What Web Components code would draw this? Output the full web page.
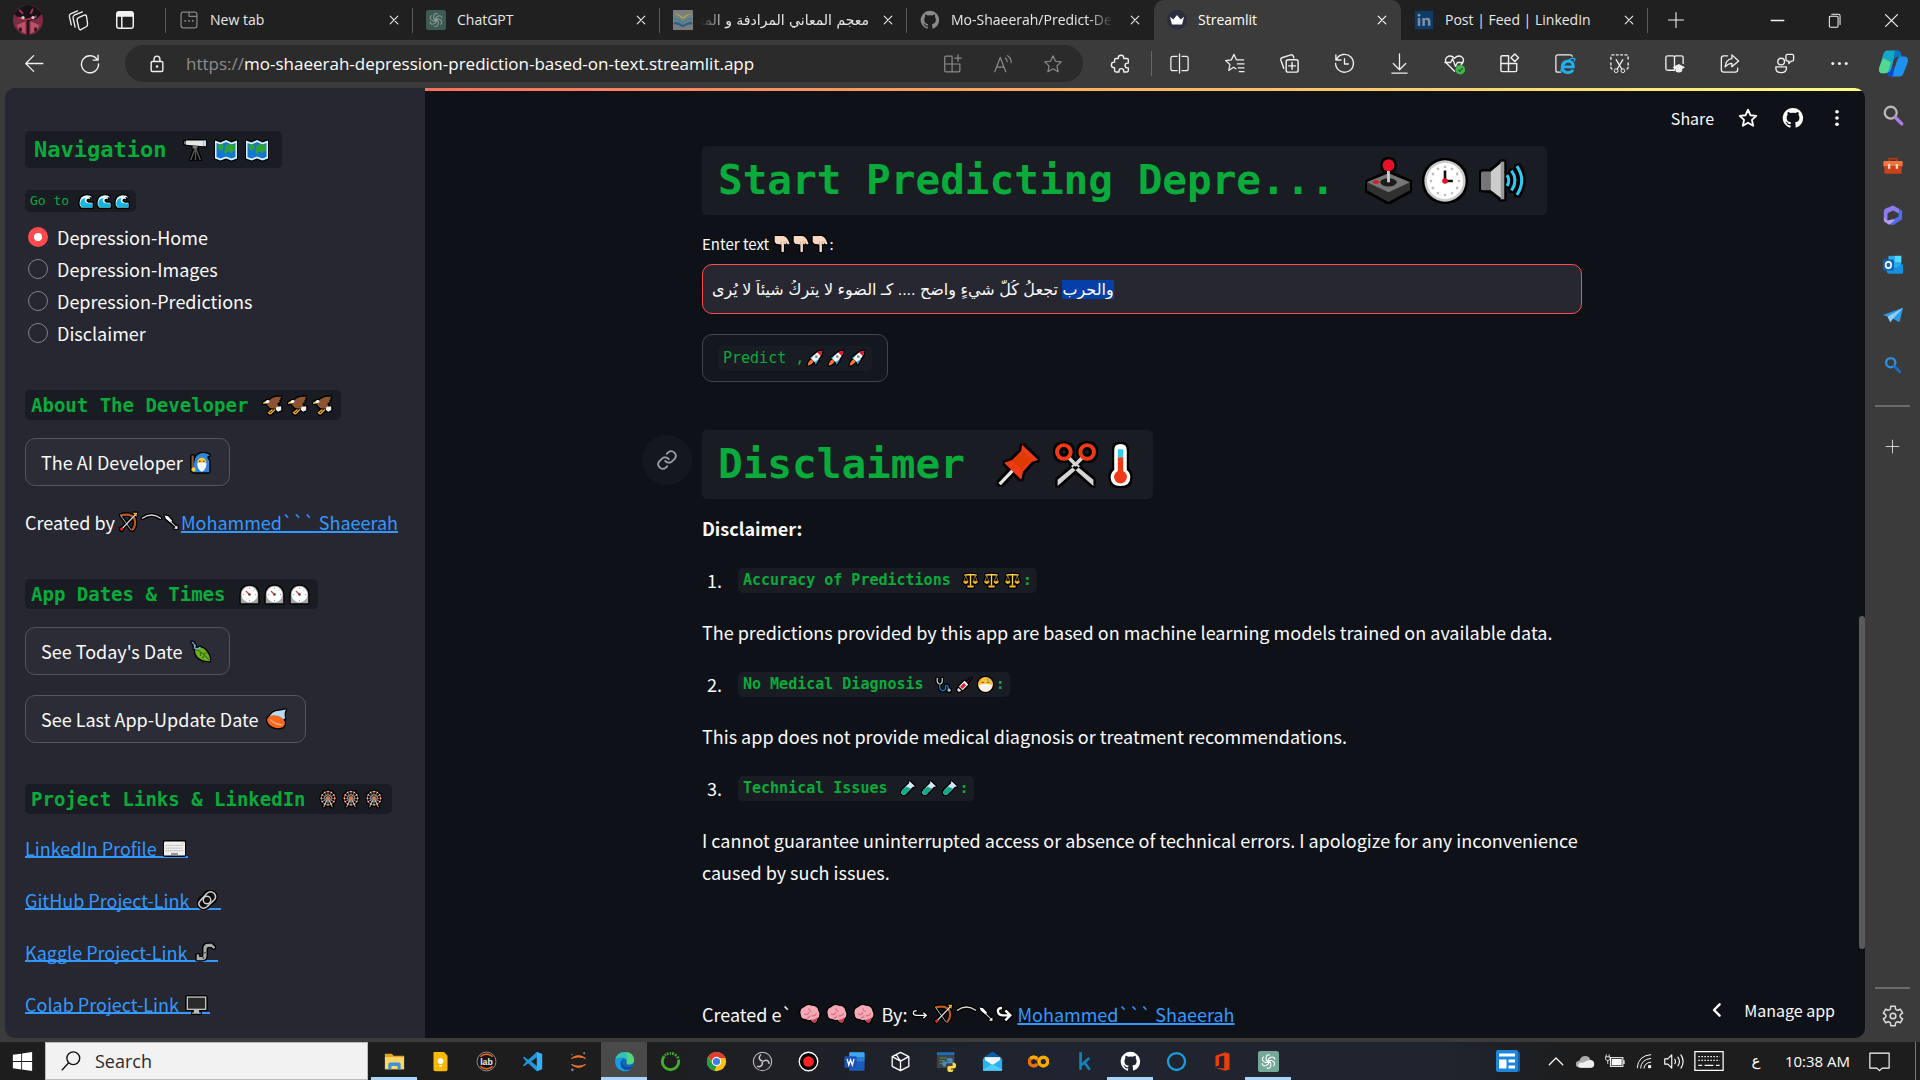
<!DOCTYPE html>
<html lang="en">
<head>
<meta charset="utf-8">
<title>Streamlit</title>
<style>
  html, body { margin: 0; height: 100%; background: #1d1d1d; overflow: hidden; }
  body { font-family: "Noto Sans CJK SC", "Noto Sans", sans-serif; color: #fafafa; }
</style>
</head>
<body>
<app-shell></app-shell>
<script>
const OPENAI = '<g fill="none" stroke="currentColor" stroke-width="1.5">' + [0,60,120,180,240,300].map(a => `<path transform="rotate(${a} 12 12)" d="M8.8 10.2V6.2a3.6 3.6 0 0 1 5.6-2.9M8.8 10.2l5.6 3.2"/>`).join('') + '</g>';
const GITHUB = '<path fill="currentColor" d="M12 1A11 11 0 0 0 8.500 22.500c.6.1.8-.3.8-.6v-2.100c-3.100.7-3.700-1.300-3.700-1.300-.5-1.300-1.200-1.600-1.200-1.600-1-.7.1-.7.1-.7 1.100.1 1.700 1.200 1.700 1.200 1 1.700 2.600 1.200 3.200.9.1-.7.4-1.200.7-1.500-2.500-.3-5-1.200-5-5.400 0-1.200.4-2.200 1.100-3-.1-.3-.5-1.400.1-2.900 0 0 .9-.3 3 1.100a10.500 10.500 0 0 1 5.500 0c2.100-1.400 3-1.100 3-1.100.6 1.500.2 2.600.1 2.900.7.8 1.100 1.800 1.100 3 0 4.200-2.500 5.100-5 5.400.4.3.8 1 .8 2v3c0 .3.200.7.8.6A11 11 0 0 0 12 1z"/>';
const L = (d, w = 1.3) => `<path d="${d}" fill="none" stroke="currentColor" stroke-width="${w}" stroke-linecap="round" stroke-linejoin="round"/>`;
const STAR = 'M12 3l2.700 6 6.300.7-4.700 4.300 1.300 6.500-5.600-3.300-5.600 3.300 1.300-6.500L3 9.700 9.300 9z';

/* Line icons and logos, all on a 24 x 24 grid. */
const ICONS = {
  avatar: '<circle cx="12" cy="12" r="12" fill="#7a2c40"/><path d="M1 7q5-7 11-7t11 7l-4 4-7 2-7-2z" fill="#161218"/><path d="M3 16l7-3v10q-5-2-7-7zM14 13l7 3q-2 5-7 7z" fill="#c05069"/><path d="M5 4l3 3M16 3l-2 4M4 10l7 2 8-3" stroke="#a9324f" stroke-width="1.500" fill="none"/><circle cx="8" cy="10" r="1.300" fill="#ccc"/><circle cx="16" cy="10" r="1.300" fill="#ccc"/><path d="M6 18v3M18 18v3M12 12v12" stroke="#25131b" stroke-width="2"/>',
  workspaces: L('M12 9l6-2.500q2-.8 2.300 1l1.200 8q.2 2-1.500 3l-5.500 3q-1.500.5-2-1L10.500 12q-.3-2 1.500-3zM8.500 19L6.300 9.500q-.4-2 1.300-3L16 3M4.500 16.500L2.500 8q-.4-2 1.300-3L11 2', 1.400),
  tabs: L('M3 5.500Q3 3 5.500 3h13Q21 3 21 5.500v13q0 2.500-2.500 2.500h-13Q3 21 3 18.500z', 1.600) + '<path d="M3 4.500Q3.500 3 5.500 3h13q2 0 2.500 1.500V8.500H3z" fill="currentColor"/>' + L('M8.500 8v13', 1.600),
  newtab: '<g color="#858585">' + L('M2.500 5Q2.500 2.500 5 2.500h14q2.500 0 2.500 2.500v14q0 2.500-2.500 2.500H5Q2.500 21.500 2.500 19zM12 3v4.500h9', 1.500) + '<path d="M6.500 12h2v2h-2zM11 12h2v2h-2zM15.500 12h2v2h-2z" fill="currentColor"/></g>',
  x: L('M5.500 5.500l13 13M18.500 5.500l-13 13', 2),
  winx: L('M4.500 4.500l15 15M19.500 4.500l-15 15', 1.500),
  gptdim: '<rect width="24" height="24" rx="3" fill="#3c5b53"/><g color="#8a9c97" transform="translate(2 2) scale(.83)">' + OPENAI + '</g>',
  gpt: '<rect width="24" height="24" rx="3" fill="#74a899"/><g color="#fff" transform="translate(2 2) scale(.83)">' + OPENAI + '</g>',
  book: '<rect width="24" height="24" fill="#7d7d7d"/><path d="M2 5q5-1 10 4 5-5 10-4-6 1-8 5h-4Q8 6 2 5z" fill="#a6b04a"/><path d="M1 9q6 0 11 5 5-5 11-5v3q-6 0-11 5-5-5-11-5z" fill="#3f8595"/><path d="M1 14q6 0 11 4 5-4 11-4v3q-6 0-11 4-5-4-11-4z" fill="#2c5f89"/>',
  github: GITHUB,
  githubdim: '<g color="#8a8a8a">' + GITHUB + '</g>',
  crown: '<circle cx="12" cy="12" r="12" fill="#2c2d3f"/><path d="M3.500 8l4 3.500L12 6l4.500 5.500 4-3.500-2.500 9.500H6z" fill="#fff"/>',
  linkedin: '<rect x="1" y="1" width="22" height="22" fill="#0f3b68"/><g fill="#7e8fa3"><rect x="4.500" y="9.500" width="3" height="9.500"/><circle cx="6" cy="6.300" r="1.700"/><path d="M10 9.500h3v1.300q1-1.600 3.300-1.600 3.400 0 3.400 4.300V19h-3v-5q0-2.200-1.700-2.200-2 0-2 2.200v5h-3z"/></g>',
  plus: L('M12 3v18M3 12h18'),
  min: L('M4 12h16', 1.600),
  restore: L('M5.500 8Q5.500 6.500 7 6.500h8q1.500 0 1.500 1.500v11q0 1.500-1.500 1.500H7q-1.500 0-1.500-1.500zM8.500 4h8.500q2 0 2 2v11'),
  back: L('M21.500 12h-19M11 3l-9 9 9 9', 1.500),
  reload: L('M20 7.500A9.300 9.300 0 1 0 21.300 12M20.800 2.500v5.300h-5.300', 1.500),
  lock: L('M5 10.500Q5 9 6.500 9h11q1.500 0 1.500 1.500v9q0 1.500-1.500 1.500h-11Q5 21 5 19.500zM8.500 9V6.500q0-4 3.500-4t3.500 4V9', 1.700) + '<circle cx="12" cy="15" r="1.500" fill="currentColor"/>',
  appadd: L('M3 5q0-1.500 1.500-1.500H11V12H3zM3 12h8v8.500H4.500Q3 20.500 3 19zM11 12h8.500v7q0 1.500-1.500 1.500h-7zM17.500 2v7M14 5.500h7'),
  aloud: L('M3 20.500L9 5l6 15.500M5 15.500h8M14.500 5.500q2 1.500 2 4M17 3q4 2.500 4 7.500'),
  star: L(STAR),
  starb: L(STAR, 2),
  puzzle: L('M9 5.500a3 3 0 0 1 6 0V6h3.500Q20 6 20 7.500V11h-1a2.600 2.600 0 0 0 0 5.200h1v3q0 1.500-1.500 1.500H15v-1a2.600 2.600 0 0 0-5.200 0v1H6.500Q5 20.700 5 19.200V16H4.500a3 3 0 0 1 0-6H5V7.500Q5 6 6.500 6H9z', 1.500),
  split: L('M9.500 4.500H5q-2 0-2 2v11q0 2 2 2h4.500M14.500 4.500H19q2 0 2 2v11q0 2-2 2h-4.500M12 2v20'),
  favs: L('M13.500 17.500L11 16l-5 3.300 1.200-6.200L2.700 9l6-.8L11.500 2.500 14 8.200h7.500M15 12.500h7M16 16.500h6M17 20.500h5'),
  collect: L('M8.500 10q0-2 2-2H19q2 0 2 2v9q0 2-2 2h-8.500q-2 0-2-2zM14.700 11v7M11.200 14.500h7M6 17L3 8.500Q2.500 6.500 4 6l9.500-3q1.800-.4 2.500 1.500L16.500 6', 1.500),
  history: L('M3.500 8A9.300 9.300 0 1 1 2.700 12M3 3v5.300h5.300M12 7v5.500h4', 1.400),
  download: L('M12 2v16M5.500 12l6.500 6.500 6.500-6.500M4 22h16'),
  health: L('M12 20L3.500 11.500Q1.500 8 4 5.500q4-3 8 1 4-4 8-1 2.500 2.500.5 6L19 13M2 11h6l2-4 3 8 2-4h5', 1.400) + '<circle cx="18" cy="18.500" r="5" fill="#44b548"/><path d="M15.800 18.500l1.700 1.600 3-3.300" stroke="#163" fill="none" stroke-width="1.300"/>',
  grid: L('M3 5.500Q3 4 4.500 4H11v8H3zM3 12h8v8.500H4.500Q3 20.500 3 19zM11 12h8.500v7q0 1.500-1.500 1.500h-7zM17.500 2l4 4-4 4-4-4z', 1.500),
  ie: L('M8 21H5q-2 0-2-2V5q0-2 2-2h13q2 0 2 1.500') + '<path d="M9.500 15.500h11.700q0-6-5.600-6-5.800.3-6 6.300.3 5.500 5.900 5.700 4 0 5.200-3" fill="none" stroke="#22b0ee" stroke-width="3"/><path d="M8.500 21.500q-1.500-3 4-9.500Q18 6.500 22 6.500q1.500.5 0 3.500" fill="none" stroke="#22b0ee" stroke-width="1.300"/>',
  snip: '<path d="M3 8V5q0-2 2-2h14q2 0 2 2v3M3 11v5q0 2 2 2M21 11v5q0 2-2 2" stroke="currentColor" fill="none" stroke-width="1.400" stroke-dasharray="3 1.500"/>' + L('M8.500 8l6 10M15.500 8l-6 10') + '<circle cx="8.500" cy="19.500" r="2" stroke="currentColor" fill="none"/><circle cx="15.500" cy="19.500" r="2" stroke="currentColor" fill="none"/>',
  learn: L('M12 5v13M12 19H5q-2 0-2-1.500V5.500Q3 4 5 4h5.500q1.500 0 1.500 1.500Q12 4 13.500 4H19q2 0 2 1.500V12', 1.400) + '<path d="M16.500 12.500l6.500 3.500-3 1.800V20q-3.500 3-7 0v-2.200L10 16z" fill="currentColor"/>',
  share: L('M10 4H6Q3.500 4 3.500 6.500v12Q3.500 21 6 21h12q2.500 0 2.500-2.500V17M14.500 3l7 6.300-7 6.200v-3.700q-4 0-7 3.700.5-7.500 7-8.500z', 1.400),
  people: '<circle cx="8.500" cy="10" r="3.500" fill="none" stroke="currentColor" stroke-width="1.400"/>' + L('M3 15.500h11v1.500q0 4.500-5.500 4.500T3 17zM13.500 4Q13.500 2.500 15 2.500h5Q21.500 2.500 21.500 4v4q0 1.500-1.500 1.500h-1l-2.500 2.500V9.500q-3 0-3-1.500z', 1.400),
  more: '<g fill="currentColor"><circle cx="5" cy="12" r="1.600"/><circle cx="12" cy="12" r="1.600"/><circle cx="19" cy="12" r="1.600"/></g>',
  copilot: '<path d="M7 2h8l-2 4-3 11q-1 2.500-4 2.500H3Q0 19 1 15L4 5q1-3 3-3z" fill="#18a7c8"/><path d="M4 8l6 3-2 7q-1 1.500-3 1.500H3Q0 19 1 15z" fill="#55d790"/><path d="M13 2h2q2.500 0 3 3l.5 2H15q-2 0-3 3z" fill="#0874c4"/><path d="M17 22H10l2-4 3-9q1-2.500 3-2.500h2.500Q24 7 23 11l-3 8q-1 3-3 3z" fill="#1d90f0"/><path d="M7 19.500q2-.5 3-2.500l2-4v7l-1 2H9q-2 0-2-2.500z" fill="#1247d0"/>',
  dots: '<g fill="currentColor"><circle cx="12" cy="4.500" r="2.200"/><circle cx="12" cy="12" r="2.200"/><circle cx="12" cy="19.500" r="2.200"/></g>',
  magnify: '<circle cx="9.500" cy="9.500" r="6.500" fill="none" stroke="#b9b9b9" stroke-width="2.500"/><path d="M15 15l6.500 6.500" stroke="#b07be8" stroke-width="3.600" stroke-linecap="round"/>',
  toolbox: '<path d="M8 8V5h8v3" stroke="#b33b12" stroke-width="2" fill="none"/><rect x="1.500" y="7.500" width="21" height="6.500" rx="1.500" fill="#f2743c"/><path d="M2.500 13h19v7q0 1.500-1.500 1.500H4q-1.500 0-1.500-1.500z" fill="#c9421a"/><path d="M6.500 11h2.500v5H6.500zM15 11h2.500v5H15z" fill="#f5d6c8"/>',
  m365: '<path d="M12 1.500l7 4v5l-7-3.500-6 3v8l-4-3V8q0-2 2-3z" fill="#8d7bf0"/><path d="M19 5.500l3 2v9l-9 6q-2 1-4-.5l-3-2 6-3 6-3.500z" fill="#4e6de6"/><path d="M2 14.500l4 3.500 6-1.500 2 1-5 4.500q-1 .5-2 0l-4-2.500q-1-1-1-2z" fill="#b49cf5"/>',
  outlook: '<rect x="7" y="2" width="14" height="14" fill="#28a8ea"/><path d="M14 2h7v7h-7z" fill="#50d9ff"/><path d="M5 11l9 5 9-5v9q0 1.500-1.500 1.500H7L5 20z" fill="#1490df"/><rect x="1" y="6" width="12" height="12" rx="1" fill="#0f64b8"/><ellipse cx="7" cy="12" rx="3" ry="3.400" fill="none" stroke="#fff" stroke-width="1.800"/>',
  plane: '<path d="M1 12L23 4l-4 16-7-4z" fill="#2c9be8"/><path d="M6 14l17-10-11 12-3 4z" fill="#8fd0fa"/>',
  bing: '<circle cx="9.500" cy="9.500" r="5" fill="none" stroke="#2d8fe0" stroke-width="2.600"/><path d="M13.500 13.500l6 6" stroke="#1b6fc4" stroke-width="3" stroke-linecap="round"/>',
  gear: L([0,1,2,3,4,5].map(i => { const p = (r, d) => { const t = (i * 60 + d - 90) * Math.PI / 180; return (12 + r * Math.cos(t)).toFixed(1) + ' ' + (12 + r * Math.sin(t)).toFixed(1); }; return (i ? 'L' : 'M') + p(10, -13) + 'L' + p(10, 13) + 'L' + p(7.5, 20) + 'Q' + p(6.8, 30) + ' ' + p(7.5, 40); }).join('') + 'z', 1.500) + '<circle cx="12" cy="12" r="2.800" fill="none" stroke="currentColor" stroke-width="1.500"/>',
  link: L('M10 13a5 5 0 0 0 7.500.5l3-3a5 5 0 0 0-7-7l-1.700 1.700M14 11a5 5 0 0 0-7.500-.5l-3 3a5 5 0 0 0 7 7l1.700-1.700', 2),
  chevL: L('M15.500 4.500L8 12l7.500 7.500', 3.200),
  windows: '<path d="M1 4.300l9.500-1.300v8.500H1zM11.500 2.900L23 1.200v10.300H11.500zM1 12.500h9.500V21L1 19.700zM11.500 12.500H23v10.300l-11.500-1.700z" fill="#fff"/>',
  search: '<circle cx="14.500" cy="9" r="7" fill="none" stroke="#111" stroke-width="1.500"/><path d="M9.500 14L2 22" stroke="#111" stroke-width="1.500"/>',
  folder: '<path d="M1 3h8l2 2.500h12V9H1z" fill="#e0a526"/><path d="M1 7h22v14H1z" fill="#fcd667"/><path d="M5 21v-6q0-2 2-2h10q2 0 2 2v6h-3.500v-4h-7v4z" fill="#3a92dc"/>',
  keep: '<path d="M5 1h11l4 4.500V21q0 2-2 2H6q-2 0-2-2V2q0-1 1-1z" fill="#fbb904"/><circle cx="12" cy="11.500" r="3.300" fill="#fff"/><path d="M10.500 16h3v2h-3z" fill="#fff"/>',
  lab: '<circle cx="12" cy="12" r="10.800" fill="#151515" stroke="#999" stroke-width="1"/><path d="M5 6.500Q12 .5 19 6.500M5 17.500q7 6 14 0" stroke="#e8651a" stroke-width="1.800" fill="none"/><text x="12" y="15.500" text-anchor="middle" font-size="10" font-weight="700" fill="#eee" font-family="Liberation Sans">lab</text>',
  vscode: '<path d="M17 1l6 2.500v17L17 23 7 14l-4.500 3.500L1 16.500 5 12 1 7.500l1.500-1L7 10zM17 7l-6.500 5 6.500 5z" fill="#2196dd" fill-rule="evenodd"/><path d="M17 1l6 2.500v17L17 23z" fill="#37aef5"/>',
  jupyter: '<path d="M4 8.500q8-6.500 16 0-8-3.500-16 0zM4 15.500q8 6.500 16 0-8 3.500-16 0z" fill="#f37726" stroke="#f37726"/><circle cx="18.500" cy="2.500" r="1.200" fill="#888"/><circle cx="5" cy="21.500" r="1.500" fill="#888"/><circle cx="4.500" cy="4" r=".8" fill="#888"/>',
  edge: '<circle cx="12" cy="12" r="11" fill="#1267b8"/><path d="M1.200 11Q2.500 1 12.500 1 22.500 1.500 23 10.500q-.5 5-5.500 5-3.500-.3-3-2.500.5-4-4-5Q4 7 1.200 11z" fill="#35c1b1"/><path d="M14 1.200q9 1 9 9.500-.5 4.500-5.500 4.800-3.500-.3-3-2.500 2-6-.5-11.800z" fill="#5fdc6b" opacity=".75"/><path d="M10 8.500q-5 5-1 10.500 4 4.500 11 1-4 4.500-11 2.500Q1 20 1.200 11 4 6.500 10 8.500z" fill="#1a9ae8"/><path d="M10 9q-3 3 0 7t11 1.500l1 .5-2 2q-7 3.500-11-1.500-3-5.500 1-9.500z" fill="#0c4f99"/>',
  anaconda: '<circle cx="12" cy="12" r="9.400" fill="none" stroke="#43b02a" stroke-width="3.200" stroke-dasharray="36 1 1.500 1.200 2 1.500 1.500 1.200 2 1.500 2 1.500 2 1.500"/>',
  chrome: '<circle cx="12" cy="12" r="11" fill="#fbc116"/><path d="M2.500 6.500a11 11 0 0 1 19 0L22 8H12L8 14z" fill="#e33b2e"/><path d="M2.500 6.500l5.500 9 4 1.500L9.500 22.700A11 11 0 0 1 2.500 6.500z" fill="#229a48"/><circle cx="12" cy="12" r="5.300" fill="#fff"/><circle cx="12" cy="12" r="4.100" fill="#3b7ded"/>',
  obs: '<circle cx="12" cy="12" r="10.500" fill="#26252b" stroke="#c6c6c6" stroke-width="1.200"/>' + [0,120,240].map(a => `<path transform="rotate(${a} 12 12)" d="M12 11.500q-4.500-1.500-3.500-5 .5-1.500 2-2.500" fill="none" stroke="#c6c6c6" stroke-width="1.700"/>`).join(''),
  rec: '<circle cx="12" cy="12" r="10.600" fill="#000" stroke="#fff" stroke-width="1.500"/><circle cx="12" cy="12" r="6" fill="#f22"/>',
  word: '<rect x="6" y="1.500" width="17.500" height="21" rx="1.500" fill="#1b5cbe"/><path d="M7.500 1.500H22q1.500 0 1.500 1.500v4H6V3q0-1.500 1.500-1.500z" fill="#41a5ee"/><path d="M6 7h17.500v5H6z" fill="#2b7cd3"/><rect x=".5" y="6" width="14" height="13" rx="1" fill="#1a52b5"/><path d="M3.500 9l2 7 2-6 2 6 2-7" stroke="#fff" stroke-width="1.500" fill="none"/>',
  cube: L('M12 1.500l9.500 5v11L12 22.500l-9.500-5v-11zM2.500 6.500l9.500 5 9.500-5M12 11.500v11M7 4l5 7.500', 1.500),
  python: '<rect x="1" y="1.500" width="20" height="18" fill="#3d4348"/><path d="M1 1.500h20v3H1z" fill="#176fc1"/><path d="M4 8h8M4 11h6M4 14h4" stroke="#5a9c3e"/><path d="M12 9q4-2 7 0v5h-6q-2 0-2 4-4 0-4-3.500T10 12h5v-1h-3z" fill="#4b8bbe"/><path d="M19 13q4 0 4 3.500T20 20h-3v1h3q0 3-3.500 3T13 21v-2q0-2 2-2h4z" fill="#ffd748"/>',
  mail: '<path d="M1 8L12 .5 23 8v4H1z" fill="#0a5dab"/><path d="M3 7h18v10H3z" fill="#f3f7fa"/><path d="M1 8.500l11 7.500 11-7.500V21q0 1.500-1.500 1.500h-19Q1 22.500 1 21z" fill="#26b3ee"/><path d="M1 21l11-6 11 6v1.500H1z" fill="#5fd2fb" opacity=".8"/>',
  colab: '<g fill="none" stroke-width="4"><circle cx="6.500" cy="12" r="5" stroke="#e8710a" stroke-dasharray="26 6" stroke-dashoffset="-3"/><circle cx="17.500" cy="12" r="5" stroke="#f9ab00"/><path d="M3 8.500a5 5 0 0 1 7 0" stroke="#f9ab00"/></g>',
  kaggle: '<path d="M7.500 1.500v20M17.500 8l-9 8M11.500 12.500l6.500 9" stroke="#1282ba" stroke-width="3" fill="none"/>',
  ring: '<circle cx="12" cy="12" r="9.700" fill="none" stroke="#18a0e0" stroke-width="2.600"/>',
  office: '<path d="M4 5.500L15 1.500l5 1.500v18l-5 1.500L4 19l10 1V5L8 6.500v10L4 18z" fill="#e83e0b"/>',
  news: '<rect x="3" y="2.500" width="21" height="20.500" rx="2" fill="#0b5ea8"/><rect x="0" y="1" width="22" height="22" rx="2" fill="#1c86dc"/><path d="M3 4.500h16v3H3zM3 10.500h7.500v9H3zM12.500 10.500H19v3h-6.500zM12.500 16.500H19v3h-6.500z" fill="#fff"/>',
  up: L('M3 17l9-9 9 9', 1.600),
  cloud: '<path d="M6 20q-5 0-5-4t4.500-4.500Q7 6 12 6q5.500 0 6.500 5Q23 11.500 23 15.500T19 20z" fill="#aaa"/><path d="M7 20q-4-.5-3-4 1.500-3 5-2l7-3q7-1 7 4.500Q23 20 19 20z" fill="#eee"/>',
  battery: '<rect x="6.500" y="8" width="15" height="10.500" fill="none" stroke="#fff" stroke-width="1.200"/><path d="M8 9.500h12V17H8zM22 11h1.500v4.500H22z" fill="#fff"/><path d="M1.500 4v3M5 4v3M.5 7H6v2.500Q5.500 11 3.300 11.500.8 11 .5 9.500zM3.300 11.500v4" stroke="#fff" fill="#1d1d1d"/>',
  wifi: L('M3 21Q4 5 21 3.500M7.500 21.500Q8 10 21 8.500M12 21.500q.5-7 9-8', 1.300) + '<path d="M17.500 17.500h4v4h-4z" fill="#fff"/>',
  volume: L('M2 9h3.500L10 4.500v15L5.500 15H2zM13.500 9.500q1.500 2.500 0 5M17 7q3.500 5 0 10M20.500 4.500q5 7.500 0 15', 1.300),
  keyboard: '<rect x=".7" y="4.500" width="22.600" height="15" fill="none" stroke="#fff" stroke-width="1"/><path d="M3.500 8.500h17M3.500 11.500h17" stroke="#fff" stroke-dasharray="1.200 1.200"/><path d="M3.500 15.500h3M8.500 15.500h7M17.500 15.500h3" stroke="#fff"/>',
  notif: L('M1 2.500h22v17h-8L12 22.500 9 19.500H1z', 1.300),
};

/* Small colour pictures used inside labels. */
const wheel = Array.from({length: 12}, (_, i) => `<path transform="rotate(${i * 30} 12 11)" d="M12 11V2" stroke="#ddd" stroke-width=".7"/><circle transform="rotate(${i * 30} 12 11)" cx="12" cy="2" r="1.100" fill="#f6d0c0"/>`).join('');
const PICS = {
  telescope: '<path d="M12 10L7 23M12 10l5 13M12 10v13" stroke="#555" stroke-width="1.500" fill="none"/><path d="M2 2.500h18v6L2 7z" fill="#e6e6e6"/><path d="M20 2.500h3V8.500h-3z" fill="#bfe6f3"/><path d="M0 3.500h2v3H0zM9 8h5v3H9z" fill="#777"/>',
  map: '<path d="M1 2.500l5.500 2L12 2l5.500 2.500L23 2.500v18l-5.500 2-5.500-2-5.500 2-5.500-2z" fill="#d8f0fb"/><path d="M2.500 5l4 1.500L12 4l5.500 2.500 4-1.500v14l-4 1.500-5.500-2-5.500 2-4-1.500z" fill="#1277d4"/><path d="M3 7l5-1 2 3-3 4-2-1zM12 7l4-1 5 1v5l-4 3-3-2-2 4-2-3z" fill="#30a138"/>',
  wave: '<path d="M1 14Q2 3 13 2q7 0 10 4-5-1-6 1 3 0 2 2-4-2-6 1-1 4 4 5h6v8H4q-4-4-3-9z" fill="#e9f8fd"/><path d="M2 16q1-8 9-9-3 5 1 8 5 2 11 1v7H5q-3-3-3-7z" fill="#13b4dd"/>',
  eagle: '<path d="M6 9q3-7 11-8l7 0-3 2.500h2l-3 2.500 2 0-4 4 2 4-5 2-6-1-4-4z" fill="#8c5431"/><path d="M1 9l4-4q4-.5 3 3l-3 1.500z" fill="#fff"/><path d="M0 10q0-3 4-3l-1 2z" fill="#ffc12b"/><path d="M17 14l6-1v5l-4 2-3-3z" fill="#f4f4f4"/><path d="M12 17l-5 4q2 3 4 0l4-4" fill="none" stroke="#f0a820" stroke-width="1.800"/>',
  mage: '<path d="M3 4v14" stroke="#8c5a35" stroke-width="2.500"/><path d="M5 11q1-9 9-10 7 0 9 3-4 0-3 3l2 3v13H4v-8z" fill="#2f86d8"/><circle cx="13.500" cy="11.500" r="5" fill="#fdc73a"/><path d="M8 13q5-2 11 0-1 8-5.500 9.500Q9 21 8 13z" fill="#f6f6f6"/><path d="M10.500 10h1.500v1.500h-1.500zM15 10h1.500v1.500H15z" fill="#222"/><circle cx="4" cy="20" r="2.500" fill="#fdc73a"/>',
  bow: '<path d="M3 4q14-3 17 5 2 7-3 13" fill="none" stroke="#c2571a" stroke-width="2.600"/><path d="M3 4l13 18" stroke="#ddd" stroke-width="1"/><path d="M4 21L21 3" stroke="#ddd" stroke-width="1.400"/><path d="M18 1l5 0-1 5z" fill="#e8b02f"/><path d="M2 20l3-2 2 2-3 3z" fill="#e22"/>',
  arc: '<path d="M0 7Q12-2 24 7" fill="none" stroke="#ddd" stroke-width="1.600"/>',
  dart: '<path d="M1 1l6 1 7 8-3 3-8-7z" fill="#fff"/><path d="M10 10l11 11" stroke="#ddd" stroke-width="1.800"/><path d="M23 24v-6l-6 5z" fill="#fff"/>',
  gauge: '<path d="M1 23V12Q2 1 12 1t11 11v11z" fill="#a5a5a5"/><circle cx="12" cy="12" r="10" fill="#fff"/><path d="M12 12L7.500 7.500" stroke="#e33" stroke-width="1.600"/><circle cx="12" cy="12" r="1.600" fill="#444"/><path d="M12 3.500v1.500M3.500 12H5M19 12h1.500M12 19v1.500M18 6l-1 1" stroke="#888"/>',
  leaf: '<path d="M6 9q8-4 13 3 4 5 4 11-8 0-12-3-6-4-5-11z" fill="#6fae1e"/><path d="M7 10q8 3 15 12M12 12v5M16 14l3 0M16 17l-2 3" stroke="#2f6f0c" stroke-width="1.200" fill="none"/><path d="M2 1l4 4-1 3 4 1 3-2M4 2l2 7" fill="none" stroke="#6fa8d6" stroke-width="1.500"/>',
  drop: '<path d="M3 11q3-9 12-9l8-1.500q-3 4-1 10-6 5-19 .5z" fill="#b5dcf2"/><ellipse cx="11.500" cy="14.500" rx="10.500" ry="7" transform="rotate(18 11.500 14.500)" fill="#f4671f"/><path d="M5 12q5 6 14 6" stroke="#ffab76" stroke-width="1.400" fill="none"/>',
  ferris: '<path d="M12 11L6 23M12 11l6 12" stroke="#999" stroke-width="1.500"/><circle cx="12" cy="11" r="9" fill="none" stroke="#c8512a" stroke-width="1.300"/><circle cx="12" cy="11" r="5" fill="none" stroke="#9aa" stroke-width=".9"/>' + wheel + '<circle cx="12" cy="11" r="2.200" fill="#ea6a3a"/>',
  keys: '<rect x="0" y="4" width="24" height="16" rx="1" fill="#f0f0f0"/><path d="M2 8.500h20M2 11.500h20M2 14.500h20" stroke="#bbb" stroke-width="1.500" stroke-dasharray="1.500 .7"/><path d="M8 17h8v2.500H8z" fill="#999"/><circle cx="21.500" cy="6" r=".8" fill="#e7b93a"/>',
  chain: '<g fill="none" stroke="#111" stroke-width="4.500"><circle cx="15.500" cy="8.500" r="6"/><circle cx="8.500" cy="15.500" r="6"/></g><g fill="none" stroke="#d2d2d2" stroke-width="2"><circle cx="12" cy="12" r="5"/><path d="M3 13L12 3q5-4 9.500 0 4 5 0 9L12 21q-5 4-9 0-4-4 0-8z"/></g>',
  arm: '<path d="M2 20h7q3 0 3-4V8q0-4 4-4h5M2 17l3 0M21 7l2-2" fill="none" stroke="#a9a9a9" stroke-width="3.800"/><circle cx="12" cy="13" r="1" fill="#333"/><circle cx="10" cy="19" r="1" fill="#333"/>',
  desktop: '<rect x="1.500" y="3.500" width="21" height="14" fill="#2a2a2a" stroke="#c8c8c8" stroke-width="1.500"/><path d="M9 18h6v3h2v1.500H7V21h2z" fill="#bbb"/>',
  joystick: '<path d="M12 8l12 5v4.500L12 24 0 17.500V13z" fill="#303030"/><path d="M12 8l12 5-12 5.500L0 13z" fill="#777"/><ellipse cx="12" cy="13" rx="4.600" ry="2.300" fill="#1c1c1c"/><path d="M11.200 5h1.600v8h-1.600z" fill="#ccc"/><circle cx="12" cy="3.500" r="3.300" fill="#ea1126"/><ellipse cx="5" cy="12.800" rx="1.700" ry="1" fill="#ea1126"/>',
  clock: '<circle cx="12" cy="12" r="11.800" fill="#ccc"/><circle cx="12" cy="12" r="10.300" fill="#fff"/>' + Array.from({length: 12}, (_, i) => `<circle transform="rotate(${i * 30} 12 12)" cx="12" cy="4" r=".75" fill="#bbb"/>`).join('') + '<path d="M12 12V6M12 12h4.500" stroke="#111" stroke-width="1.500"/><circle cx="12" cy="12" r="1.600" fill="#ea1126"/>',
  speaker: '<rect x="0" y="7" width="6" height="10.500" rx="1" fill="#767676"/><path d="M5.500 7L12 1.500v21L5.500 17.500z" fill="#ccc"/><path d="M11 1.500h2v21h-2z" fill="#999"/><path d="M14.500 9q2 3 0 6M17 6.500q4 5.500 0 11M20 4q5.500 8 0 16" fill="none" stroke="#2dccf5" stroke-width="1.700"/>',
  down: '<path d="M1 0h12q5 1 7 6l2 5-2 1-3-2v2l-3-1v11q-1.500 2-3.500 0V12L3 11 1 8z" fill="#f9d9c4"/><path d="M14 7v4M17 7v3M10.500 8v4" stroke="#c79b80" stroke-width="1"/>',
  rocket: '<path d="M4 12l7-5 7 7-5 8-2-5-4-3z" fill="#22a7e0"/><path d="M23 1Q13 2 6.500 13l5 5Q22 11 23 1z" fill="#f4f4f4"/><path d="M23 1q-5 0-8 2.500l5.500 5.500Q23 6 23 1z" fill="#d81e34"/><circle cx="14" cy="10" r="2" fill="#888"/><path d="M7 14q-5 2-6 9.500Q8 22 10 17z" fill="#f6752a"/>',
  pin: '<path d="M10 14L1.500 23" stroke="#e6e6e6" stroke-width="1.800"/><path d="M14 1l9 8.500-3.500 1-5 5.500-1 4.500-9.500-9.500 4.500-1.500 5-5z" fill="#f03a17"/><path d="M14.500 4.500L19 9l-5 6-5-5z" fill="#dd3b00"/>',
  scissors: '<path d="M11 11.500l11 9v3.500L9.500 13zM13 11.500L2 20.500V24l12.500-11z" fill="#d4d4d4"/><path d="M8 8l4.500 4.500M16 8l-4.500 4.500" stroke="#d4d4d4" stroke-width="2"/><circle cx="5.500" cy="5" r="3.800" fill="none" stroke="#f03a17" stroke-width="2.200"/><circle cx="18.500" cy="5" r="3.800" fill="none" stroke="#f03a17" stroke-width="2.200"/>',
  thermo: '<path d="M8.500 4q0-3.500 3.500-3.500T15.500 4v11q2 1.500 2 4 0 5-5.500 5t-5.500-5q0-2.500 2-4z" fill="#fff"/><path d="M10.500 3.500h3V8h-3z" fill="#2dccf5"/><path d="M10.500 8h3v9h-3z" fill="#f03a17"/><circle cx="12" cy="19" r="3.600" fill="#f03a17"/>',
  scales: '<path d="M12 1v19M2 3.500q10-2 20 0" stroke="#ffd24a" stroke-width="2.200" fill="none"/><path d="M4.500 4L1.500 13h6zM19.500 4l-3 9h6z" fill="none" stroke="#c9a03c" stroke-width="1"/><path d="M0 13h9q-1 4.500-4.500 4.500T0 13zM15 13h9q-1 4.500-4.500 4.500T15 13zM7 20h10v3H7z" fill="#ffb91f"/>',
  steth: '<path d="M2 1.500q-1 9 4 10 5-1 4-10" fill="none" stroke="#ccc" stroke-width="2"/><path d="M6 11q-1 11 5 11 6-1 4-7 2-4 4 0l1 5" fill="none" stroke="#1277d4" stroke-width="2.200"/><circle cx="21" cy="21" r="2.500" fill="#bbb"/>',
  syringe: '<path d="M14 10l9-8.500" stroke="#8a1f2a" stroke-width="1.300"/><path d="M12 6l6 6-9 9-6-6z" fill="#f1f1f1"/><path d="M11 9.500l3.500 3.500-6 6L5 15.500z" fill="#d81e34"/><path d="M2 17l5 5-4 2-3-3z" fill="#ddd"/>',
  mask: '<circle cx="12" cy="12" r="12" fill="#fdc13a"/><path d="M1 13q11-4 22 0-1 9-11 10Q2 22 1 13z" fill="#f4f4f4"/><path d="M5.500 9q2-1.500 4 0M14.500 9q2-1.500 4 0" stroke="#5b4410" stroke-width="1.400" fill="none"/><path d="M15 2l3 4h-4z" fill="#2db7e8"/>',
  tube: '<path d="M16 2l6 6L9 21q-4 3-7-1-1-3 2-6z" fill="#cfe8f5"/><path d="M10.500 9l7 3L9 21q-4 3-7-1-1-3 2-6z" fill="#0fa98c"/><path d="M14.500 1l8.500 8" stroke="#e5f3fb" stroke-width="2"/>',
  brain: '<path d="M1 13Q-1 6 5 4q4-4 9-2 7 0 8 6 3 6-1 9l-2 5q-4 1-6-3-4 1-6-1-6 0-6-5z" fill="#f5a8b6"/><path d="M5 12q4 2 6-2M11 5q-1 3 3 4M14 14q4 1 6-3M8 17q3 0 4-3" stroke="#d66f84" stroke-width="1.400" fill="none"/><path d="M14 19q4 0 7-3l-2 6q-3 3-5-3z" fill="#c73a52"/>',
  hookthin: '<path d="M7 7Q2 7 2 10.500T7 14h14M17 10l4.500 4-4.500 4" fill="none" stroke="#fafafa" stroke-width="1.900"/>',
  hookbold: '<path d="M9 3Q2 3 3 8.500T11 14h9M14 6.500l7.500 7.500-7.500 7.500" fill="none" stroke="#fafafa" stroke-width="3.600"/>',
};

const define = (name, css, html, init) => {
  const tpl = document.createElement('template');
  customElements.define(name, class extends HTMLElement {
    constructor() { super(); this.attachShadow({ mode: 'open' }); }
    connectedCallback() {
      const a = k => this.getAttribute(k) ?? '';
      tpl.innerHTML = `<style>*{box-sizing:border-box}:host{display:block;box-sizing:border-box}${css}</style>` + (typeof html === 'function' ? html(a) : html);
      this.shadowRoot.replaceChildren(tpl.content.cloneNode(true));
      init?.(this.shadowRoot);
    }
  });
};
const ic = (n, s = 24) => `<ui-icon name="${n}" size="${s}"></ui-icon>`;
const em = (n, w, s, times = 1) => `<em-oji name="${n}" w="${w}" s="${s}"></em-oji>`.repeat(times);
const svg = (body, s) => `<svg width="${s}" height="${s}" viewBox="0 0 24 24" aria-hidden="true">${body}</svg>`;

define('ui-icon', ':host{display:inline-flex;flex:none}svg{display:block}', a => svg(ICONS[a('name')], a('size')));
define('em-oji',
  ':host{--o:1px;display:inline-flex;flex:none;vertical-align:middle;justify-content:center}svg{display:block;flex:none;overflow:visible;filter:drop-shadow(var(--o) 0 0 #000) drop-shadow(calc(0px - var(--o)) 0 0 #000) drop-shadow(0 var(--o) 0 #000) drop-shadow(0 calc(0px - var(--o)) 0 #000)}',
  a => `<style>:host{width:${a('w')}px${+a('s') > 30 ? ';--o:2px' : ''}}</style>` + svg(PICS[a('name')], a('s')));

/* Browser chrome */
define('browser-tab', `
  :host{flex:0 1 247px;min-width:0;height:40px;display:flex;align-items:center;gap:11px;padding:0 8px 0 13px;font:14px/20px "Open Sans",sans-serif;color:#e8e8e8;position:relative}
  :host([active]){background:#3b3b3b;border-radius:10px 10px 0 0;color:#fff}
  :host(:not([active]))::after{content:"";width:1px;height:25px;background:#5c5c5c;position:absolute;right:0;top:8px}
  :host([beforeactive])::after{display:none}
  .t{flex:1;min-width:0;white-space:nowrap;overflow:hidden;padding-bottom:1px}
  :host([fade]) .t{-webkit-mask:linear-gradient(90deg,#000 85%,transparent)}
  :host([rtl]){gap:8px}
  :host([rtl]) .t{direction:rtl;-webkit-mask:linear-gradient(270deg,#000 85%,transparent);font-family:"DejaVu Sans",sans-serif}
  button{all:unset;display:flex;padding:4px}`,
  a => ic(a('icon'), 20) + `<span class="t"><slot></slot></span><button aria-label="Close tab">${ic('x', 14)}</button>`);

define('tab-strip', `
  :host{height:40px;background:#202020;display:flex;align-items:center;flex:none;color:#f2f2f2}
  .lead{display:flex;align-items:center;gap:24px;width:166px;height:25px;padding-left:13px;border-right:1px solid #5c5c5c;flex:none}
  button{all:unset;display:flex}
  .new{margin-left:18px}.win{margin-left:auto;display:flex;gap:38px;padding-right:19px}`,
  `<div class="lead"><button aria-label="Profile">${ic('avatar', 30)}</button><button aria-label="Workspaces">${ic('workspaces', 23)}</button><button aria-label="Tab actions">${ic('tabs', 22)}</button></div>
  <browser-tab icon="newtab">New tab</browser-tab>
  <browser-tab icon="gptdim">ChatGPT</browser-tab>
  <browser-tab icon="book" rtl>معجم المعاني المرادفة و المتضادة</browser-tab>
  <browser-tab icon="githubdim" fade beforeactive>Mo-Shaeerah/Predict-Depression</browser-tab>
  <browser-tab icon="crown" active>Streamlit</browser-tab>
  <browser-tab icon="linkedin">Post | Feed | LinkedIn</browser-tab>
  <button class="new" aria-label="New tab">${ic('plus', 20)}</button>
  <div class="win"><button aria-label="Minimize">${ic('min', 19)}</button><button aria-label="Restore">${ic('restore', 19)}</button><button aria-label="Close">${ic('winx', 19)}</button></div>`);

define('address-bar', `
  :host{flex:1;min-width:0;height:37px;border-radius:19px;background:#2b2b2b;display:flex;align-items:center;padding:0 19px 0 22px;font:17px/24px "Open Sans",sans-serif}
  a{flex:1;margin-left:19px;color:#fff;text-decoration:none;white-space:nowrap;min-width:0;overflow:hidden}
  i{font-style:normal;color:#8d8d8d}
  .r{display:flex;gap:28px;color:#8c8c8c}`,
  `${ic('lock', 20)}<a href="#"><i>https://</i>mo-shaeerah-depression-prediction-based-on-text.streamlit.app</a><span class="r">${['appadd', 'aloud', 'star'].map(n => ic(n, 22)).join('')}</span>`);

define('browser-toolbar', `
  :host{height:48px;flex:none;background:#3b3b3b;display:flex;align-items:center;color:#f0f0f0;padding-bottom:1px}
  button{all:unset;display:flex;justify-content:center;flex:0 0 55px}
  .nav{width:125px;display:flex;padding-left:7px;flex:none}
  .p{margin-left:8px;border-right:1px solid #666;height:25px;align-items:center;flex-basis:60px}
  .copilot{flex-basis:53px}`,
  `<div class="nav"><button aria-label="Back">${ic('back', 21)}</button><button aria-label="Refresh">${ic('reload', 22)}</button></div>
  <address-bar></address-bar><button class="p" aria-label="Extensions">${ic('puzzle', 22)}</button>
  ${[['split', 'Split screen'], ['favs', 'Favorites'], ['collect', 'Collections'], ['history', 'History'], ['download', 'Downloads'], ['health', 'Browser essentials'], ['grid', 'Apps'], ['ie', 'IE mode'], ['snip', 'Screenshot'], ['learn', 'Math solver'], ['share', 'Share'], ['people', 'Feedback'], ['more', 'More'], ['copilot', 'Copilot']].map(([n, l]) => `<button class="${n}" aria-label="${l}">${ic(n, n === 'copilot' ? 31 : 23)}</button>`).join('')}`);

define('side-rail', `
  :host{width:55px;flex:none;display:flex;flex-direction:column;align-items:center;padding:15px 0 12px;color:#ddd;background:#3b3b3b}
  button{all:unset;display:flex;align-items:center;height:50px}
  hr{width:35px;border:0;border-top:2px solid #6b6b6b;margin:15px 0 14px}
  .find{height:24px;margin-bottom:13px}
  .b{margin-top:auto;display:flex;flex-direction:column;align-items:center}.b button{height:28px}.b hr{margin:0 0 13px}`,
  `<button class="find" aria-label="Search">${ic('magnify', 22)}</button>${[['toolbox', 'Tools'], ['m365', 'Microsoft 365'], ['outlook', 'Outlook'], ['plane', 'Drop'], ['bing', 'Bing']].map(([n, l]) => `<button aria-label="${l}">${ic(n, 22)}</button>`).join('')}<hr><button aria-label="Customize">${ic('plus', 17)}</button>
  <div class="b"><hr><button aria-label="Settings">${ic('gear', 24)}</button></div>`);

/* Streamlit parts */
define('code-chip', `
  :host{display:inline-flex;align-items:center;white-space:pre;background:#1a1c24;color:#09ab3b;border-radius:5px;font-family:"DejaVu Sans Mono",monospace;font-weight:400;font-size:15px;line-height:25px;padding:0 5px}
  :host([size=xl]){font-size:41px;line-height:69px;padding:0 16px;font-weight:700}
  :host([size=lg]){font-size:22px;line-height:37px;padding:0 9px;font-weight:700}
  :host([size=md]){font-size:19px;line-height:30px;padding:0 6px;font-weight:700}
  :host([size=sm]){font-size:13px;line-height:22px}
  :host([strong]){font-weight:700}`, '<slot></slot>');

define('st-button', ':host{display:block}button{display:inline-flex;align-items:center;height:48px;padding:0 15px;border:1px solid #53545c;border-radius:10px;background:#2b2c36;color:#fafafa;font:inherit;white-space:pre}:host([main]) button{background:#131720;border-color:#41444c}', '<button type="button"><slot></slot></button>');

define('st-radio', `
  fieldset{border:0;margin:0;padding:0;min-width:0}legend{padding:0;margin-bottom:9px;display:flex}
  label{display:flex;align-items:center;height:32px;gap:9px;padding-left:3px}
  input{appearance:none;margin:0;width:20px;height:20px;border:1px solid #82838b;border-radius:50%;flex:none}
  input:checked{border:6px solid #ff4b4b;background:#fff}`,
  `<fieldset><legend><code-chip size="sm">Go to ${em('wave', 18, 14, 3)}</code-chip></legend>
  ${['Depression-Home', 'Depression-Images', 'Depression-Predictions', 'Disclaimer'].map((t, i) => `<label><input type="radio" name="page"${i ? '' : ' checked'}>${t}</label>`).join('')}</fieldset>`);

define('st-sidebar', `
  :host{width:420px;flex:none;background:#262730;padding:43px 20px 0;font-size:18px;line-height:32px;overflow:hidden}
  h2,h3,p{margin:0;font-size:inherit;display:flex}
  h2{margin-bottom:22px}h3{margin:41px 0 18px}
  p{white-space:pre;align-items:center;height:32px}p.by{margin:20px 0 1px}
  st-button+st-button{margin-top:20px}
  a{color:#39f}p.l a{display:inline-flex;align-items:center;white-space:pre;text-decoration:none;line-height:24px;background:linear-gradient(#39f,#39f) 0 20px/100% 2px no-repeat}
  p.l{margin-bottom:20px}p.by a{text-decoration-thickness:2px}`,
  `<h2><code-chip size="lg">Navigation ${em('telescope', 31, 23)}${em('map', 31, 24, 2)}</code-chip></h2>
  <st-radio></st-radio>
  <h3><code-chip size="md">About The Developer ${em('eagle', 25, 19, 3)}</code-chip></h3>
  <st-button>The AI Developer ${em('mage', 27, 21)}</st-button>
  <p class="by">Created by${em('bow', 27, 20)}${em('arc', 20, 19)}${em('dart', 19, 14)}<a href="#">Mohammed\`\`\` Shaeerah</a></p>
  <h3><code-chip size="md">App Dates &amp; Times ${em('gauge', 25, 19, 3)}</code-chip></h3>
  <st-button>See Today's Date ${em('leaf', 27, 21)}</st-button><st-button>See Last App-Update Date ${em('drop', 27, 21)}</st-button>
  <h3><code-chip size="md">Project Links &amp; LinkedIn ${em('ferris', 23, 18, 3)}</code-chip></h3>
  <p class="l"><a href="#">LinkedIn Profile ${em('keys', 27, 21)}</a></p>
  <p class="l"><a href="#">GitHub Project-Link ${em('chain', 27, 18)}</a></p>
  <p class="l"><a href="#">Kaggle Project-Link ${em('arm', 27, 20)}</a></p>
  <p class="l"><a href="#">Colab Project-Link ${em('desktop', 27, 21)}</a></p>`);

define('st-text-input', `
  label{display:flex;align-items:center;white-space:pre;font-size:15px;line-height:24px;margin-bottom:8px}
  input{display:block;width:100%;height:50px;border:1px solid #ff4b4b;border-radius:10px;background:#262730;color:#fafafa;padding:0 9px;outline:0;font:16px/24px "Liberation Sans","DejaVu Sans",sans-serif}
  input::selection{background:#0540a8;color:#fff}`,
  `<label for="entry">Enter text ${em('down', 19, 17, 3)}:</label><input id="entry" type="text" value="والحرب تجعلُ كُلّ شيءٍ واضحٍ .... كـ الضوء لا يتركُ شيئاً لا يُرى">`,
  root => requestAnimationFrame(() => { const i = root.querySelector('input'); i.focus(); i.setSelectionRange(0, 6); }));

define('st-main', `
  :host{flex:1;min-width:0;background:#0e1117;position:relative;display:flex;flex-direction:column;font-size:18px;line-height:32px;border-top:3px solid;border-image:linear-gradient(90deg,#ff6f5e,#fda85f 40%,#fffd80) 1}
  header{display:flex;justify-content:flex-end;align-items:center;height:55px;gap:23px;padding:0 18px 2px;font-size:16px;flex:none}
  button{all:unset;display:flex;align-items:center}
  .body{flex:1;display:flex;min-height:0}
  .scroll{flex:1;display:flex;justify-content:center;min-width:0}
  main{width:880px}
  .bar{width:6px;flex:none;padding-top:470px}.bar i{display:block;height:333px;background:#59595e;border-radius:4px}
  h1{margin:0;display:flex;position:relative}h1+*{margin-top:17px}
  .anchor{position:absolute;right:calc(100% + 10px);top:5px;width:50px;height:50px;border-radius:50%;background:#131720;display:flex;align-items:center;justify-content:center;color:#9b9da1}
  .pred{margin:20px 0 48px}
  p{margin:0 0 20px;white-space:pre-wrap}
  h1+p{margin-top:13px}
  ol{margin:0 0 20px;padding:0;list-style:none}
  ol b{font-weight:400;width:20px;text-align:right}
  ol li{display:flex;align-items:center;gap:16px}
  .foot{display:flex;align-items:center;margin-top:110px;white-space:pre}
  .foot a{color:#39f;text-decoration-thickness:2px;margin-left:4px}
  .manage{position:absolute;right:30px;bottom:12px;gap:18px;line-height:32px;font-size:16px}`,
  `<header><button>Share</button><button aria-label="Favorite">${ic('starb', 22)}</button><button aria-label="GitHub">${ic('github', 22)}</button><button aria-label="Menu">${ic('dots', 20)}</button></header>
  <div class="body"><div class="scroll"><main>
    <h1><code-chip size="xl">Start Predicting Depre... ${em('joystick', 57, 43)}${em('clock', 57, 42)}${em('speaker', 57, 43)}</code-chip></h1>
    <st-text-input></st-text-input>
    <st-button main class="pred"><code-chip>Predict ,${em('rocket', 21, 16, 3)}</code-chip></st-button>
    <h1><a class="anchor" href="#" aria-label="Link to section">${ic('link', 22)}</a><code-chip size="xl">Disclaimer ${em('pin', 57, 43)}${em('scissors', 57, 43)}${em('thermo', 33, 43)}</code-chip></h1>
    <p><strong>Disclaimer:</strong></p>
    <ol><li><b>1.</b><code-chip strong>Accuracy of Predictions ${em('scales', 21, 15, 3)}:</code-chip></li></ol>
    <p>The predictions provided by this app are based on machine learning models trained on available data.</p>
    <ol><li><b>2.</b><code-chip strong>No Medical Diagnosis ${em('steth', 21, 15)}${em('syringe', 21, 15)}${em('mask', 21, 15)}:</code-chip></li></ol>
    <p>This app does not provide medical diagnosis or treatment recommendations.</p>
    <ol><li><b>3.</b><code-chip strong>Technical Issues ${em('tube', 21, 15, 3)}:</code-chip></li></ol>
    <p>I cannot guarantee uninterrupted access or absence of technical errors. I apologize for any inconvenience caused by such issues.</p>
    <div class="foot">Created e\` ${em('brain', 27, 20, 3)} By: ${em('hookthin', 18, 16)}${em('bow', 27, 20)}${em('arc', 20, 19)}${em('dart', 19, 14)}${em('hookbold', 18, 16)}<a href="#">Mohammed\`\`\` Shaeerah</a></div>
  </main></div><div class="bar"><i></i></div></div>
  <button class="manage">${ic('chevL', 18)}Manage app</button>`);

/* Windows taskbar */
define('win-taskbar', `
  :host{height:38px;flex:none;background:linear-gradient(90deg,#1d1d1d 30%,#1f2430 55%,#1f242e 75%,#1d1d1d 82%);display:flex;align-items:stretch;color:#fff}
  button{all:unset;display:flex;align-items:center;justify-content:center;flex:0 1 46px}
  .start{flex:0 0 45px}
  .s{flex:0 1 323px;background:#f2f2f2;border:1px solid #bbb;display:flex;align-items:center;gap:13px;padding:0 14px}
  .s input{all:unset;flex:1;min-width:0;font:18px/24px "Open Sans",sans-serif}.s input::placeholder{color:#2b2b2b;opacity:1}
  .apps{display:flex;padding-left:3px}.apps button{width:46px}
  .run{box-shadow:inset 0 -3px #a9d4fb}.act{background:#4a4a4a}
  .tray{margin-left:auto;display:flex;align-items:center;gap:10px;font:15px/20px "Open Sans",sans-serif}
  .tray button{flex:none}.ar{width:20px;text-align:center;margin:0 9px 0 12px;font-family:"DejaVu Sans",sans-serif}
  .news{margin-right:17px}.n{margin:0 25px 0 9px}.edge{width:5px;align-self:stretch;border-left:1px solid #777;margin-left:-10px}`,
  `<button class="start" aria-label="Start">${ic('windows', 21)}</button>
  <label class="s">${ic('search', 22)}<input type="search" placeholder="Search" aria-label="Search"></label>
  <div class="apps">${['folder.run', 'keep', 'lab', 'vscode', 'jupyter', 'edge.run act', 'anaconda', 'chrome', 'obs', 'rec', 'word', 'cube', 'python', 'mail', 'colab', 'kaggle', 'github.run', 'ring', 'office', 'gpt.run'].map(e => { const [n, c = ''] = e.split('.'); return `<button class="${c}" aria-label="${n}">${ic(n, 21)}</button>`; }).join('')}</div>
  <div class="tray"><button class="news" aria-label="News">${ic('news', 24)}</button>${[['up', 18], ['cloud', 20], ['battery', 20], ['wifi', 18], ['volume', 21], ['keyboard', 30]].map(([n, s]) => `<button aria-label="${n}">${ic(n, s)}</button>`).join('')}<span class="ar">ع</span><time>10:38 AM</time><button class="n" aria-label="Notifications">${ic('notif', 21)}</button><span class="edge"></span></div>`);

define('app-shell', `
  :host{height:100vh;display:flex;flex-direction:column}
  .mid{flex:1;min-height:0;display:flex;background:#3b3b3b;padding-left:5px}
  .page{flex:1;min-width:0;display:flex;margin-bottom:4px;border-radius:10px;overflow:hidden}`,
  `<tab-strip></tab-strip><browser-toolbar></browser-toolbar>
  <div class="mid"><div class="page"><st-sidebar></st-sidebar><st-main></st-main></div><side-rail></side-rail></div>
  <win-taskbar></win-taskbar>`);
</script>
</body>
</html>
